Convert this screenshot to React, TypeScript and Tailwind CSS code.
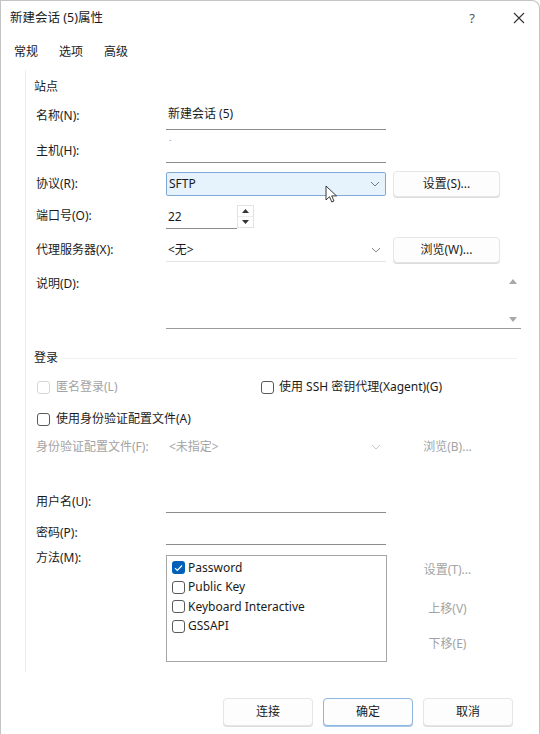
import React from "react";

const FONT = { fontFamily: '"Noto Sans","Noto Sans CJK SC",sans-serif' };

function Chevron({ color = "#6b6b6b" }: { color?: string }) {
  return (
    <svg width="10" height="6" viewBox="0 0 10 6" className="shrink-0">
      <path d="M1 1l4 4 4-4" fill="none" stroke={color} strokeWidth="1" />
    </svg>
  );
}

function Check({ checked = false, disabled = false }: { checked?: boolean; disabled?: boolean }) {
  if (checked)
    return (
      <span className="w-[13px] h-[13px] rounded-[3px] bg-[#005fb8] flex items-center justify-center shrink-0">
        <svg width="9" height="8" viewBox="0 0 9 8">
          <path d="M1 4.2l2.3 2.3L8 1.5" fill="none" stroke="#fff" strokeWidth="1.2" />
        </svg>
      </span>
    );
  return (
    <span
      className={
        "w-[13px] h-[13px] rounded-[3px] border shrink-0 bg-white " +
        (disabled ? "border-[#d6d6d6]" : "border-[#5a5a5a]")
      }
    />
  );
}

function Btn({ children, cls = "" }: { children: React.ReactNode; cls?: string }) {
  return (
    <div
      className={
        "w-[107px] h-[26px] flex items-center justify-center rounded-[4px] border border-[#e6e6e6] bg-[#fdfdfd] shadow-[0_1px_0_#dcdcdc] text-[#1b1b1b] " +
        cls
      }
    >
      {children}
    </div>
  );
}

export default function App() {
  return (
    <div
      style={FONT}
      className="w-[540px] h-[734px] bg-white text-[12px] leading-[18px] text-[#1b1b1b] border-l border-t border-r border-[#c4c4c4] rounded-tr-[8px] flex flex-col relative overflow-hidden"
    >
      {/* title bar */}
      <div className="h-[33px] flex items-center pl-[9px] pr-[14px]">
        <span className="text-[12.5px]">新建会话 (5)属性</span>
        <span className="ml-auto text-[13px] text-[#555] mr-[38px]">?</span>
        <svg width="12" height="12" viewBox="0 0 12 12">
          <path d="M1 1l10 10M11 1L1 11" stroke="#333" strokeWidth="1.1" />
        </svg>
      </div>
      {/* tabs */}
      <div className="h-[36px] flex items-center pl-[13px] gap-[21px]">
        <span>常规</span>
        <span>选项</span>
        <span>高级</span>
      </div>
      {/* panel */}
      <div className="ml-[24px] mr-[3px] h-[602px] border-l border-[#ececec] flex flex-col pl-[8px]">
        <div className="mt-[8px] h-[18px]">站点</div>

        {/* 名称 */}
        <div className="mt-[4px] h-[30px] flex items-end pl-[2px]">
          <span className="w-[130px] pb-[5px]">名称(N):</span>
          <div className="w-[220px] h-full border-b border-[#8c8c8c] flex items-center pl-[2px] pb-[2px]">新建会话 (5)</div>
        </div>
        {/* 主机 */}
        <div className="mt-[3px] h-[30px] flex items-end pl-[2px]">
          <span className="w-[130px] pb-[3px]">主机(H):</span>
          <div className="w-[220px] h-full border-b border-[#8c8c8c] pl-[3px] pt-[0px] text-[#888] text-[9px] leading-[10px]">.</div>
        </div>
        {/* 协议 */}
        <div className="mt-[7px] h-[28px] flex items-center pl-[2px]">
          <span className="w-[130px]">协议(R):</span>
          <div className="w-[220px] h-[24px] border border-[#7fa9d6] bg-[#e7f3fc] rounded-[2px] flex items-center pl-[2px] pr-[5px] relative">
            <span>SFTP</span>
            <span className="ml-auto">
              <Chevron color="#777" />
            </span>
            <svg width="13" height="19" viewBox="0 0 13 19" className="absolute left-[158px] top-[12px]">
              <path d="M1 1v14l3.5-3.3 2.3 5.3 2.2-1-2.3-5.1H11.5z" fill="#fff" stroke="#222" strokeWidth="0.9" strokeLinejoin="round" />
            </svg>
          </div>
          <Btn cls="ml-[7px]">设置(S)...</Btn>
        </div>
        {/* 端口号 */}
        <div className="mt-[5px] h-[26px] flex items-center pl-[2px]">
          <span className="w-[130px]">端口号(O):</span>
          <div className="w-[88px] h-[24px] flex items-stretch self-end">
            <div className="w-[71px] border-b border-[#8c8c8c] flex items-center pl-[2px]">22</div>
            <div className="w-[17px] h-[23px] border border-[#e2e2e2] flex flex-col bg-white">
              <div className="flex-1 flex items-center justify-center border-b border-[#ededed]">
                <svg width="7" height="4" viewBox="0 0 7 4"><path d="M0 4L3.5 0 7 4z" fill="#333" /></svg>
              </div>
              <div className="flex-1 flex items-center justify-center">
                <svg width="7" height="4" viewBox="0 0 7 4"><path d="M0 0L3.5 4 7 0z" fill="#333" /></svg>
              </div>
            </div>
          </div>
        </div>
        {/* 代理服务器 */}
        <div className="mt-[7px] h-[28px] flex items-center pl-[2px]">
          <span className="w-[130px]">代理服务器(X):</span>
          <div className="w-[220px] h-[24px] border-b border-[#e3e3e3] bg-white flex items-center pl-[2px] pr-[5px]">
            <span>&lt;无&gt;</span>
            <span className="ml-auto">
              <Chevron color="#888" />
            </span>
          </div>
          <Btn cls="ml-[7px]">浏览(W)...</Btn>
        </div>
        {/* 说明 */}
        <div className="mt-[6px] h-[59px] flex items-start pl-[2px]">
          <span className="w-[130px] pt-[5px]">说明(D):</span>
          <div className="w-[355px] h-full border-b border-[#9a9a9a] flex flex-col items-end pr-[4px] pt-[9px] pb-[6px] justify-between">
            <svg width="8" height="5" viewBox="0 0 8 5"><path d="M0 5L4 0 8 5z" fill="#a8a8a8" /></svg>
            <svg width="8" height="5" viewBox="0 0 8 5"><path d="M0 0L4 5 8 0z" fill="#a8a8a8" /></svg>
          </div>
        </div>

        {/* 登录 */}
        <div className="mt-[20px] h-[18px] flex items-center">
          <span>登录</span>
          <div className="ml-[6px] w-[453px] h-px bg-[#f0f0f0]" />
        </div>
        <div className="mt-[11px] h-[18px] flex items-center pl-[3px]">
          <div className="w-[224px] flex items-center gap-[6px] text-[#a3a3a3]">
            <Check disabled />
            <span>匿名登录(L)</span>
          </div>
          <div className="flex items-center gap-[5px]">
            <Check />
            <span>使用 SSH 密钥代理(Xagent)(G)</span>
          </div>
        </div>
        <div className="mt-[14px] h-[18px] flex items-center pl-[3px] gap-[6px]">
          <Check />
          <span>使用身份验证配置文件(A)</span>
        </div>
        <div className="mt-[10px] h-[18px] flex items-center pl-[2px] text-[#a3a3a3]">
          <span className="w-[130px]">身份验证配置文件(F):</span>
          <div className="w-[220px] flex items-center pl-[3px] pr-[5px]">
            <span>&lt;未指定&gt;</span>
            <span className="ml-auto">
              <Chevron color="#c8c8c8" />
            </span>
          </div>
          <div className="ml-[8px] w-[107px] flex items-center justify-center">浏览(B)...</div>
        </div>

        {/* 用户名 */}
        <div className="mt-[28px] h-[29px] flex items-end pl-[2px]">
          <span className="w-[130px] pb-[2px]">用户名(U):</span>
          <div className="w-[220px] h-full border-b border-[#8c8c8c]" />
        </div>
        <div className="mt-[2px] h-[30px] flex items-end pl-[2px]">
          <span className="w-[130px] pb-[3px]">密码(P):</span>
          <div className="w-[220px] h-full border-b border-[#8c8c8c]" />
        </div>
        {/* 方法 */}
        <div className="mt-[10px] h-[107px] flex items-start pl-[2px]">
          <span className="w-[130px] -mt-[6px]">方法(M):</span>
          <div className="w-[221px] h-full border border-[#a6a6a6] flex flex-col pt-[2px] pl-[5px]">
            {[
              ["Password", true],
              ["Public Key", false],
              ["Keyboard Interactive", false],
              ["GSSAPI", false],
            ].map(([t, c]) => (
              <div key={t as string} className="h-[19.5px] flex items-center gap-[3px]">
                <Check checked={c as boolean} />
                <span>{t as string}</span>
              </div>
            ))}
          </div>
          <div className="ml-[7px] w-[107px] flex flex-col items-center text-[#a3a3a3]">
            <span className="mt-[6px]">设置(T)...</span>
            <span className="mt-[21px]">上移(V)</span>
            <span className="mt-[17px]">下移(E)</span>
          </div>
        </div>
      </div>

      {/* bottom buttons */}
      <div className="mt-[26px] flex justify-end gap-[10px] pr-[26px]">
        <div className="w-[90px] h-[28px] flex items-center justify-center rounded-[4px] border border-[#e6e6e6] bg-[#fdfdfd] shadow-[0_1px_0_#dcdcdc]">连接</div>
        <div className="w-[90px] h-[28px] flex items-center justify-center rounded-[4px] border border-[#8db6e0] bg-[#fdfdfd] shadow-[0_1px_0_#a9c6e6]">确定</div>
        <div className="w-[90px] h-[28px] flex items-center justify-center rounded-[4px] border border-[#e6e6e6] bg-[#fdfdfd] shadow-[0_1px_0_#dcdcdc]">取消</div>
      </div>
    </div>
  );
}
